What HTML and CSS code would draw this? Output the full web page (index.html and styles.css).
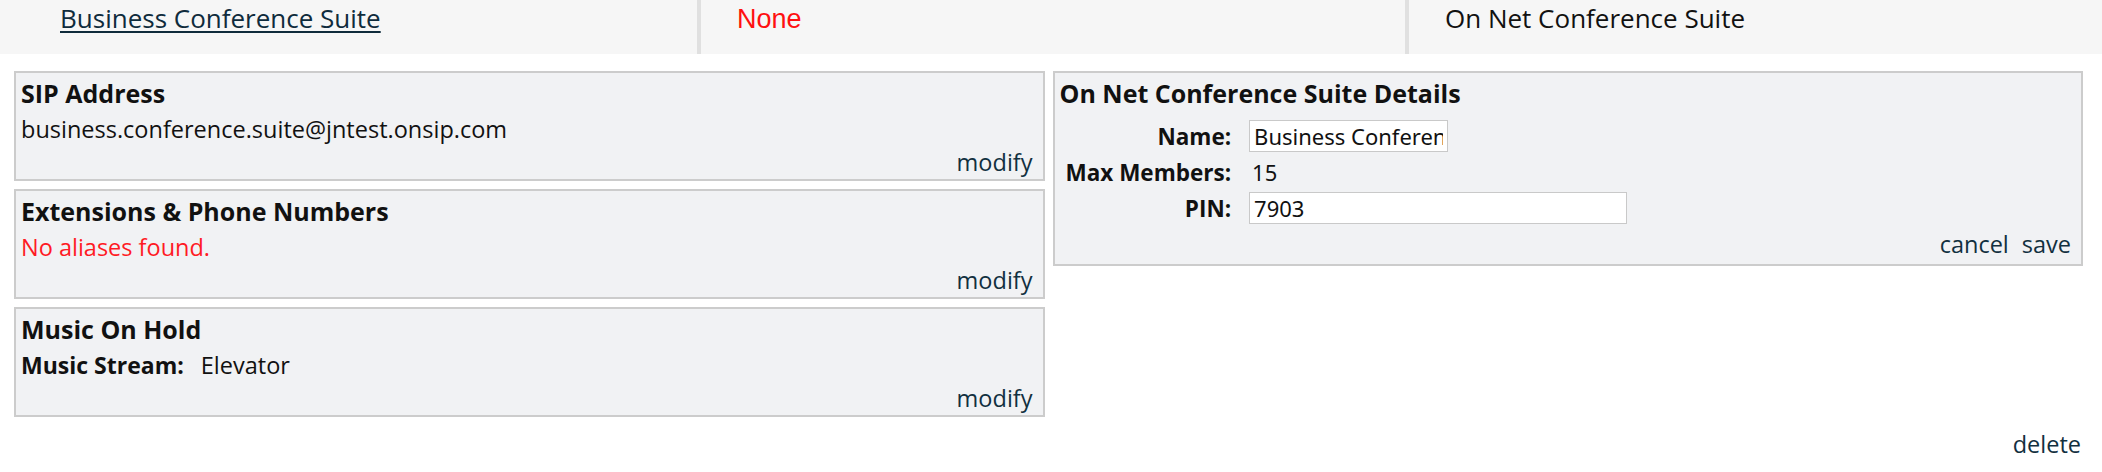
FILE: index.html
```html
<!DOCTYPE html>
<html lang="en">
<head>
<meta charset="utf-8">
<title>Business Conference Suite</title>
<link rel="stylesheet" href="styles.css">
</head>
<body>
<div class="topbar">
  <div class="tcol tcol-first"><a class="tlink" href="#">Business Conference Suite</a></div>
  <div class="tcol tcol-sep"><span class="none">None</span></div>
  <div class="tcol tcol-sep">On Net Conference Suite</div>
</div>

<div class="main">
  <div class="leftcol">
    <section class="box">
      <h3 class="box-title">SIP Address</h3>
      <div class="box-text">business.conference.suite@jntest.onsip.com</div>
      <div class="box-actions"><a class="act" href="#">modify</a></div>
    </section>
    <section class="box">
      <h3 class="box-title">Extensions &amp; Phone Numbers</h3>
      <div class="box-text error">No aliases found.</div>
      <div class="box-actions"><a class="act" href="#">modify</a></div>
    </section>
    <section class="box">
      <h3 class="box-title">Music On Hold</h3>
      <div class="box-text"><span class="lbl">Music Stream:</span><span class="val">Elevator</span></div>
      <div class="box-actions"><a class="act" href="#">modify</a></div>
    </section>
  </div>

  <div class="rightcol">
    <section class="box details">
      <h3 class="box-title">On Net Conference Suite Details</h3>
      <div class="form">
        <label class="flabel">Name:</label>
        <div class="fval"><input class="inp inp-name" type="text" value="Business Conference Suite"></div>
        <label class="flabel">Max Members:</label>
        <div class="fval"><span class="plain">15</span></div>
        <label class="flabel">PIN:</label>
        <div class="fval"><input class="inp inp-pin" type="text" value="7903"></div>
      </div>
      <div class="box-actions details-actions"><a class="act" href="#">cancel</a><a class="act act-save" href="#">save</a></div>
    </section>
  </div>
</div>

<div class="footer"><a class="act" href="#">delete</a></div>
</body>
</html>
```

FILE: styles.css
```css
html, body {
  margin: 0;
  padding: 0;
  background: #ffffff;
}
body {
  font-family: "Open Sans", "Noto Sans", sans-serif;
  color: #111111;
  font-size: 23px;
}

.topbar {
  display: grid;
  grid-template-columns: 697px 708px 1fr;
  height: 54px;
  background: #f6f6f6;
}
.tcol {
  font-size: 26px;
  line-height: 34px;
  padding-top: 1px;
  padding-left: 40px;
  color: #111;
}
.tcol-first {
  padding-left: 60px;
}
.tcol-sep {
  border-left: 4px solid #e0e0e0;
  padding-left: 36px;
}
.tlink {
  color: #0f2b3c;
  text-decoration: underline;
  text-decoration-thickness: 2px;
  text-underline-offset: 3px;
}
.none {
  font-family: "Liberation Sans", Arial, sans-serif;
  font-size: 27px;
  color: #ff1010;
}

.main {
  display: grid;
  grid-template-columns: 1fr 1fr;
  column-gap: 8px;
  padding: 17px 19px 0 14px;
}
.leftcol {
  display: flex;
  flex-direction: column;
  gap: 8px;
}
.rightcol {
  align-self: start;
}

.box {
  box-sizing: border-box;
  background: #f1f2f4;
  border: 2px solid #cccccc;
  padding: 4px 10px 2px 5px;
  display: flex;
  flex-direction: column;
  height: 110px;
}
.box-title {
  margin: 0;
  font-size: 25px;
  font-weight: 700;
  line-height: 32px;
  color: #111;
}
.box-text {
  line-height: 34px;
  font-size: 23.5px;
  margin-top: 3px;
}
.error {
  color: #ff1a24;
}
.lbl {
  font-weight: 700;
  font-size: 23px;
}
.val {
  margin-left: 17px;
}
.box-actions {
  margin-top: auto;
  text-align: right;
  line-height: 32px;
}
.act {
  color: #12303f;
  text-decoration: none;
  font-size: 23.5px;
}

.details {
  height: auto;
  padding-bottom: 3px;
}
.form {
  display: grid;
  grid-template-columns: max-content 1fr;
  grid-auto-rows: 36px;
  column-gap: 18px;
  align-items: center;
  margin: 9px 0 0 6px;
}
.flabel {
  font-weight: 700;
  text-align: right;
  font-size: 22.5px;
  white-space: nowrap;
}
.fval {
  display: flex;
  align-items: center;
}
.inp {
  box-sizing: border-box;
  height: 32px;
  border: 1px solid #c9c9c9;
  background: #ffffff;
  font-family: "Noto Sans", "Open Sans", sans-serif;
  font-size: 22px;
  color: #111;
  padding: 0 4px;
  margin: 0;
  outline: none;
}
.inp-name {
  width: 199px;
}
.inp-pin {
  width: 378px;
}
.plain {
  font-family: "Noto Sans", "Open Sans", sans-serif;
  font-size: 22px;
  padding-left: 3px;
}
.details-actions {
  margin-top: 1px;
  line-height: 34px;
}
.act-save {
  margin-left: 13px;
}

.footer {
  text-align: right;
  padding: 10px 21px 0 0;
  line-height: 34px;
}
```
